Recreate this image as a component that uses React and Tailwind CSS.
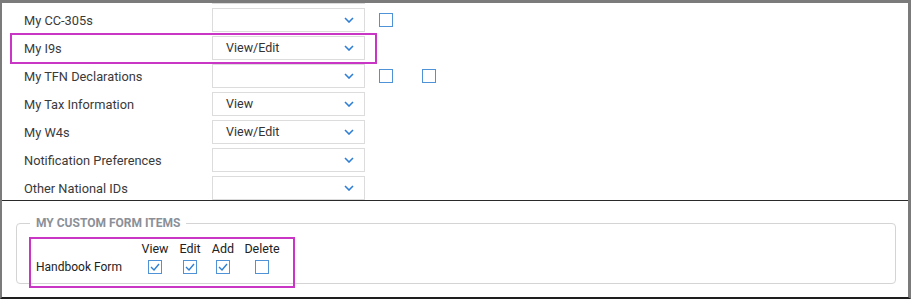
import React from "react";

const rows = [
  { label: "My CC-305s", value: "", boxes: 1 },
  { label: "My I9s", value: "View/Edit", boxes: 0 },
  { label: "My TFN Declarations", value: "", boxes: 2 },
  { label: "My Tax Information", value: "View", boxes: 0 },
  { label: "My W4s", value: "View/Edit", boxes: 0 },
  { label: "Notification Preferences", value: "", boxes: 0 },
  { label: "Other National IDs", value: "", boxes: 0 },
];

const Chevron = () => (
  <svg width="10" height="6" viewBox="0 0 10 6" className="shrink-0">
    <polyline points="1,1 5,5 9,1" fill="none" stroke="#2f7fd3" strokeWidth="1.6" />
  </svg>
);

const Box = ({ checked }) => (
  <div className="w-[14px] h-[14px] border border-[#4f93d6] bg-white flex items-center justify-center">
    {checked && (
      <svg width="10" height="8" viewBox="0 0 10 8">
        <polyline points="1,4 4,7 9,1" fill="none" stroke="#2f7fd3" strokeWidth="1.4" />
      </svg>
    )}
  </div>
);

const Select = ({ value }) => (
  <div className="w-[153px] h-[24px] border border-[#dcdcdc] bg-white flex items-center justify-between pl-[13px] pr-[10px]">
    <span className="text-[12.5px] text-[#333]">{value}</span>
    <Chevron />
  </div>
);

export default function App() {
  return (
    <div
      className="w-[911px] h-[299px] bg-white border-t-[3px] border-l-[2px] border-r-[3px] border-b-2 border-t-[#7b7b7b] border-l-[#7b7b7b] border-r-[#7b7b7b] border-b-[#1e1e1e] flex flex-col overflow-hidden"
      style={{ fontFamily: "Roboto, 'Liberation Sans', sans-serif" }}
    >
      {/* permission rows */}
      <div className="relative h-[198px] border-b border-[#2a2a2a] pl-[22px] flex flex-col">
        <div className="ml-[188px] w-[153px] h-[3px] border-x border-b border-[#dcdcdc]" />
        <div className="flex flex-col gap-[4px] pt-[4px]">
          {rows.map((r) => (
            <div key={r.label} className="flex items-center h-[24px]">
              <div className="w-[188px] text-[12.8px] text-[#3a3a3a] pt-[1px]">{r.label}</div>
              <Select value={r.value} />
              {r.boxes > 0 && (
                <div className="flex gap-[29px] ml-[14px]">
                  {Array.from({ length: r.boxes }).map((_, i) => (
                    <Box key={i} />
                  ))}
                </div>
              )}
            </div>
          ))}
        </div>
        <div className="absolute left-[8px] top-[30px] w-[367px] h-[31px] border-2 border-[#c936c6]" />
      </div>

      {/* custom form items */}
      <div className="relative flex-1 px-[14px] pt-[13px]">
        <fieldset className="w-[880px] h-[70px] border border-[#d4d4d4] rounded-[4px] px-[19px] pt-[12px]">
          <legend className="ml-[-6px] px-[6px] text-[12px] font-bold text-[#8b9098]">
            MY CUSTOM FORM ITEMS
          </legend>
          <div className="flex items-end mt-[-2px]">
            <div className="w-[104px] text-[12px] text-[#222] mb-[-2px]">Handbook Form</div>
            {[
              ["View", true, "w-[30px]"],
              ["Edit", true, "w-[30px] ml-[5px]"],
              ["Add", true, "w-[30px] ml-[3px]"],
              ["Delete", false, "w-[40px] ml-[4px]"],
            ].map(([t, c, w]) => (
              <div key={t} className={`${w} flex flex-col items-center gap-[4px]`}>
                <span className="text-[12.5px] text-[#222] leading-[14px]">{t}</span>
                <Box checked={c} />
              </div>
            ))}
          </div>
        </fieldset>
        <div className="absolute left-[27px] top-[36px] w-[266px] h-[51px] border-2 border-[#c936c6]" />
      </div>
    </div>
  );
}
